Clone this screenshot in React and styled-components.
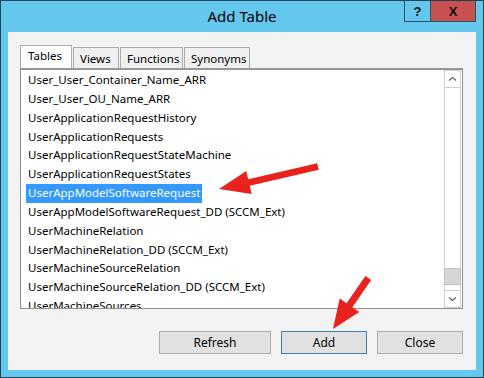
import React from 'react';
import styled, { createGlobalStyle } from 'styled-components';

const GlobalStyle = createGlobalStyle`
  html, body {
    margin: 0;
    padding: 0;
    background: #ffffff;
  }
  body {
    width: 484px;
    height: 378px;
    overflow: hidden;
    font-family: 'Noto Sans', 'Liberation Sans', sans-serif;
  }
`;

const Window = styled.div`
  position: relative;
  box-sizing: border-box;
  width: 484px;
  height: 378px;
  border: 1px solid #1d4457;
  background: #63c7ee;
  padding: 0 7px 7px;
  display: flex;
  flex-direction: column;
`;

const TitleBar = styled.div`
  height: 31px;
  flex-shrink: 0;
  display: grid;
  grid-template-columns: 1fr auto 1fr;
`;

const Title = styled.div`
  grid-column: 2;
  align-self: center;
  font-size: 15px;
  color: #000;
  margin-top: -1px;
`;

const Caption = styled.div`
  grid-column: 3;
  justify-self: end;
  align-self: start;
  display: flex;
`;

const CaptionButton = styled.div`
  box-sizing: border-box;
  width: ${(p) => p.$w}px;
  height: 21px;
  border-left: 1px solid #2a5263;
  border-bottom: 1px solid #2a5263;
  border-right: ${(p) => (p.$last ? '1px solid #2a5263' : 'none')};
  background: ${(p) => p.$bg};
  display: flex;
  align-items: center;
  justify-content: center;
  font-family: 'Liberation Sans', sans-serif;
  font-weight: bold;
  font-size: 13px;
  color: #111;
`;

const Client = styled.div`
  flex: 1;
  background: #f3f3f3;
  padding: 13px 13px 16px 12px;
  display: flex;
  flex-direction: column;
`;

const TabStrip = styled.div`
  display: flex;
  align-items: flex-end;
  gap: 1px;
  height: 23px;
`;

const Tab = styled.div`
  box-sizing: border-box;
  width: ${(p) => p.$w}px;
  height: ${(p) => (p.$active ? 23 : 21)}px;
  border: 1px solid #acacac;
  border-bottom: none;
  background: ${(p) => (p.$active ? '#ffffff' : '#f0f0f0')};
  padding: ${(p) => (p.$active ? '0 0 3px 7px' : '0 0 0 6px')};
  display: flex;
  align-items: center;
  font-size: 11.5px;
  color: #000;
`;

const ListBox = styled.div`
  box-sizing: border-box;
  height: 241px;
  border: 1px solid #8f8f8f;
  border-top: 2px solid #979797;
  background: #ffffff;
  display: flex;
`;

const Items = styled.div`
  flex: 1;
  overflow: hidden;
  padding: 1px 0 0 5px;
`;

const Item = styled.div`
  width: fit-content;
  height: 18.85px;
  line-height: 18.85px;
  padding: 0 2px;
  font-size: 11.5px;
  white-space: nowrap;
  color: ${(p) => (p.$selected ? '#ffffff' : '#000000')};
  background: ${(p) => (p.$selected ? '#3399ff' : 'transparent')};
`;

const ScrollBar = styled.div`
  box-sizing: border-box;
  width: 17px;
  margin-right: 1px;
  border: 1px solid #cfcfcf;
  display: flex;
  flex-direction: column;
  background: #ffffff;
`;

const ScrollArrow = styled.div`
  height: 16px;
  flex-shrink: 0;
  display: flex;
  align-items: center;
  justify-content: center;
  border-bottom: ${(p) => (p.$down ? 'none' : '1px solid #cfcfcf')};
  border-top: ${(p) => (p.$down ? '1px solid #cfcfcf' : 'none')};
`;

const Track = styled.div`
  flex: 1;
  display: flex;
  flex-direction: column;
`;

const Thumb = styled.div`
  box-sizing: border-box;
  height: 17px;
  margin: 0 -1px;
  background: #d6d6d6;
  border: 1px solid #c2c2c2;
`;

const ButtonRow = styled.div`
  display: flex;
  justify-content: flex-end;
  gap: 10px;
  margin-top: 22px;
`;

const Button = styled.div`
  box-sizing: border-box;
  width: ${(p) => p.$w}px;
  height: 23px;
  border: 1px solid ${(p) => (p.$default ? '#3c7fb8' : '#adadad')};
  background: #e1e1e1;
  display: flex;
  align-items: center;
  justify-content: center;
  font-size: 12px;
  color: #000;
`;

const Annotations = styled.svg`
  position: absolute;
  top: -1px;
  left: -1px;
  pointer-events: none;
`;

const tables = [
  'User_User_Container_Name_ARR',
  'User_User_OU_Name_ARR',
  'UserApplicationRequestHistory',
  'UserApplicationRequests',
  'UserApplicationRequestStateMachine',
  'UserApplicationRequestStates',
  'UserAppModelSoftwareRequest',
  'UserAppModelSoftwareRequest_DD (SCCM_Ext)',
  'UserMachineRelation',
  'UserMachineRelation_DD (SCCM_Ext)',
  'UserMachineSourceRelation',
  'UserMachineSourceRelation_DD (SCCM_Ext)',
  'UserMachineSources',
];

const tabs = [
  { label: 'Tables', w: 52 },
  { label: 'Views', w: 46 },
  { label: 'Functions', w: 63 },
  { label: 'Synonyms', w: 66 },
];

const Chevron = ({ down }) => (
  <svg width="9" height="6" viewBox="0 0 9 6">
    <path
      d={down ? 'M1 1.5 L4.5 4.5 L8 1.5' : 'M1 4.5 L4.5 1.5 L8 4.5'}
      fill="none"
      stroke="#606060"
      strokeWidth="1.2"
    />
  </svg>
);

export default function App() {
  const selected = 6;
  const trackSpace = 205 - 17;
  const scrollRatio = 0.955;

  return (
    <>
      <GlobalStyle />
      <Window>
        <TitleBar>
          <Title>Add Table</Title>
          <Caption>
            <CaptionButton $w={26} $bg="#63c7ee">?</CaptionButton>
            <CaptionButton $w={46} $bg="#c75050" $last>
              X
            </CaptionButton>
          </Caption>
        </TitleBar>

        <Client>
          <TabStrip>
            {tabs.map((t, i) => (
              <Tab key={t.label} $w={t.w} $active={i === 0}>
                {t.label}
              </Tab>
            ))}
          </TabStrip>

          <ListBox>
            <Items>
              {tables.map((name, i) => (
                <Item key={name} $selected={i === selected}>
                  {name}
                </Item>
              ))}
            </Items>
            <ScrollBar>
              <ScrollArrow>
                <Chevron />
              </ScrollArrow>
              <Track>
                <Thumb style={{ marginTop: Math.round(trackSpace * scrollRatio) }} />
              </Track>
              <ScrollArrow $down>
                <Chevron down />
              </ScrollArrow>
            </ScrollBar>
          </ListBox>

          <ButtonRow>
            <Button $w={112}>Refresh</Button>
            <Button $w={86} $default>
              Add
            </Button>
            <Button $w={86}>Close</Button>
          </ButtonRow>
        </Client>

        <Annotations width="484" height="378" viewBox="0 0 484 378">
          <polygon
            fill="#e8231e"
            points="219,189 246.3,170.9 248.2,179.2 317.2,163.2 318.8,169.8 249.8,185.8 251.7,194.1"
          />
          <polygon
            fill="#e8231e"
            points="333,329 339.7,298.4 346.6,303.2 365.4,276.1 371.2,280.1 352.4,307.2 359.3,312"
          />
        </Annotations>
      </Window>
    </>
  );
}
